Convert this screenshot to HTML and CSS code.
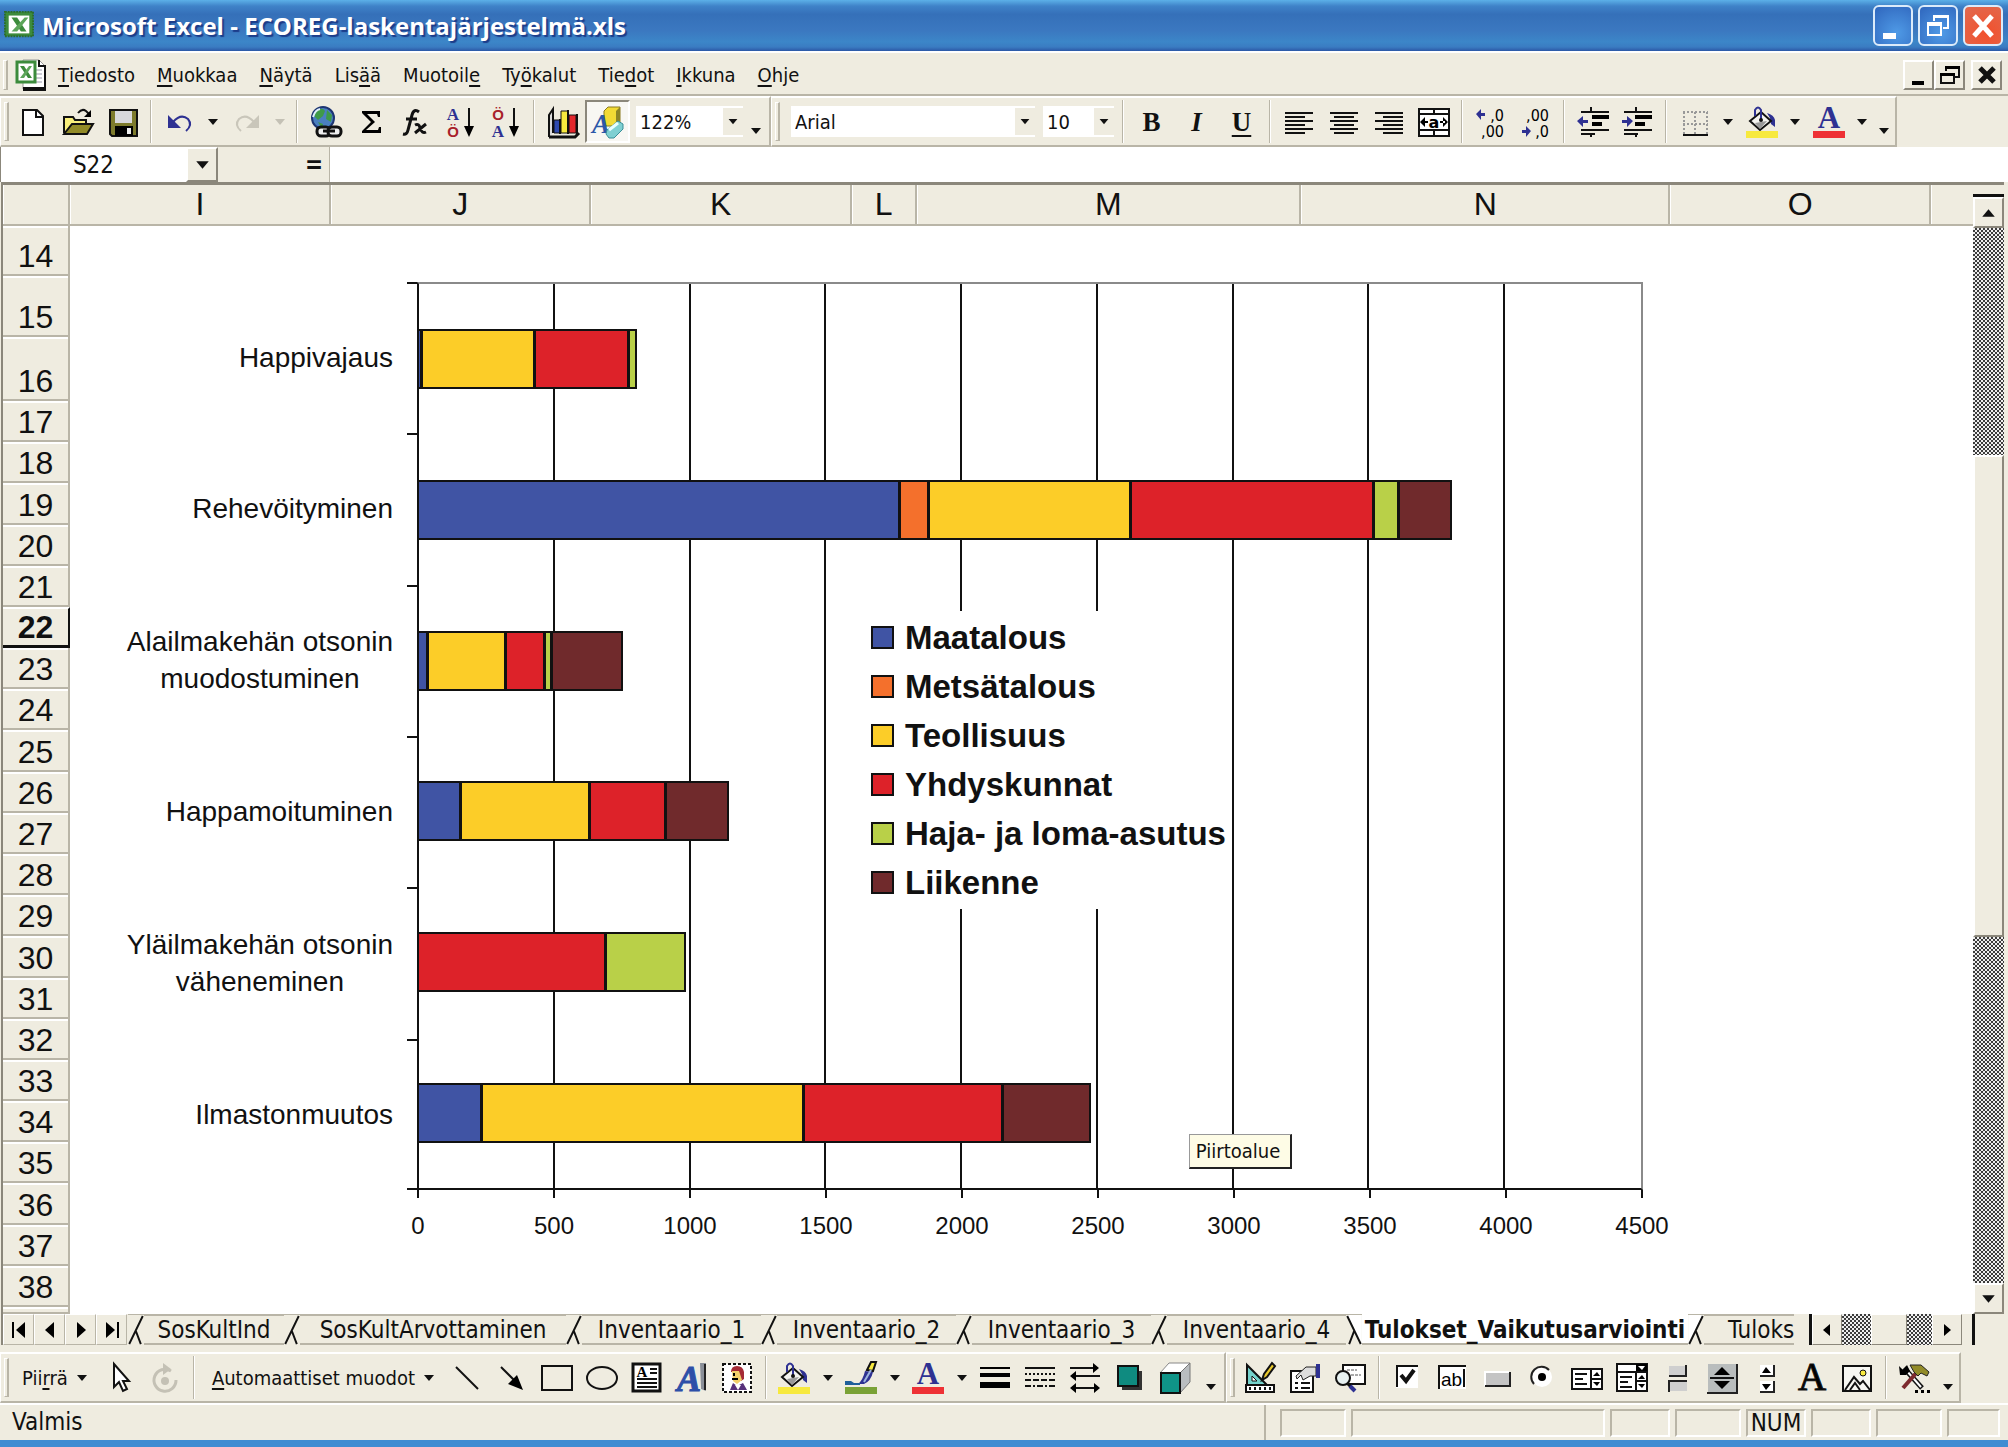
FILE: index.html
```html
<!DOCTYPE html>
<html lang="fi">
<head>
<meta charset="utf-8">
<title>Microsoft Excel - ECOREG-laskentajärjestelmä.xls</title>
<link rel="stylesheet" href="styles.css">
</head>
<body>
<svg class="defs" aria-hidden="true">
  <symbol id="tri" viewBox="0 0 12 8"><path d="M1 1h10l-5 6z" fill="currentColor"/></symbol>
  <symbol id="align-l" viewBox="0 0 32 32"><path d="M2 7h28M2 11h20M2 15h28M2 19h20M2 23h28M2 27h20" stroke="#111" stroke-width="2"/></symbol>
  <symbol id="align-c" viewBox="0 0 32 32"><path d="M2 7h28M6 11h20M2 15h28M6 19h20M2 23h28M6 27h20" stroke="#111" stroke-width="2"/></symbol>
  <symbol id="align-r" viewBox="0 0 32 32"><path d="M2 7h28M10 11h20M2 15h28M10 19h20M2 23h28M10 27h20" stroke="#111" stroke-width="2"/></symbol>
  <symbol id="bucket" viewBox="0 0 32 32">
    <path d="M21 7q7 2 8 7v7l-4-3-1-6z" fill="#2e3192"/>
    <path d="M4 15 15 6l10 9-11 9z" fill="#f4f4f0" stroke="#111" stroke-width="2"/>
    <path d="M9 17l12-2-7 8z" fill="#999"/>
    <path d="M9 10V4q3-5 6 0v10" fill="none" stroke="#2e3192" stroke-width="2"/><circle cx="15" cy="14" r="2" fill="#111"/>
    <path d="M0 25h32v7H0z" fill="#f7e93e"/>
  </symbol>
  <symbol id="font-color" viewBox="0 0 32 32" overflow="visible">
    <text x="16" y="22" text-anchor="middle" font-family="Liberation Serif, serif" font-weight="700" font-size="31" fill="#2e3192">A</text>
    <path d="M0 25h32v7H0z" fill="#ee3135"/>
  </symbol>
</svg>

<header class="titlebar">
  <svg class="app-icon" viewBox="0 0 32 32"><path d="M1 3h30v26H1z" fill="#3c8b3c" stroke="#2c6e2c" stroke-width="2" stroke-dasharray="2 1"/><path d="M5 7h22v19H5z" fill="#fff"/><path d="M8 9h6l10 15h-6z" fill="#3c8b3c"/><path d="M22 9h4L14 24H8z" fill="#5da55a"/></svg>
  <h1>Microsoft Excel - ECOREG-laskentajärjestelmä.xls</h1>
  <div class="win-buttons">
    <button class="win-btn" aria-label="Pienennä"><svg viewBox="0 0 32 32"><path d="M6 23h13v6H6z" fill="#fff"/></svg></button>
    <button class="win-btn" aria-label="Palauta"><svg viewBox="0 0 32 32"><path d="M12 11V6h14v12h-5M6 13h13v12H6z" fill="none" stroke="#fff" stroke-width="2"/><path d="M11 5h16v3H11zM5 12h15v4H5z" fill="#fff"/></svg></button>
    <button class="win-btn win-close" aria-label="Sulje"><svg viewBox="0 0 32 32"><path d="M7 6l18 20M25 6L7 26" stroke="#fff" stroke-width="5"/></svg></button>
  </div>
</header>

<nav class="menubar">
  <span class="grip"></span>
  <svg class="doc-icon" viewBox="0 0 32 34"><path d="M8 2h16l6 6v23H8z" fill="#fff" stroke="#999" stroke-width="1"/><path d="M24 2v6h6v22" fill="none" stroke="#111" stroke-width="2"/><path d="M8 29h23v4H8z" fill="#111"/><path d="M20 12h7M20 16h7M20 20h7M12 24h15" stroke="#99a" stroke-width="1"/><path d="M2 4h18v20H2z" fill="#fff" stroke="#3c8b3c" stroke-width="3"/><path d="M5 8h4l8 12h-4z" fill="#3c8b3c"/><path d="M14 8h3L9 20H5z" fill="#5da55a"/></svg>
  <button class="menu"><u>T</u>iedosto</button>
  <button class="menu"><u>M</u>uokkaa</button>
  <button class="menu"><u>N</u>äytä</button>
  <button class="menu">Lis<u>ä</u>ä</button>
  <button class="menu">Muotoil<u>e</u></button>
  <button class="menu">Ty<u>ö</u>kalut</button>
  <button class="menu">Tie<u>d</u>ot</button>
  <button class="menu"><u>I</u>kkuna</button>
  <button class="menu"><u>O</u>hje</button>
  <div class="doc-buttons">
    <button class="doc-btn" aria-label="Pienennä työkirja"><svg viewBox="0 0 24 24"><path d="M5 18h12v4H5z"/></svg></button>
    <button class="doc-btn" aria-label="Palauta työkirja"><svg viewBox="0 0 24 24"><path d="M8 8V4h13v10h-4M3 11h13v9H3z" fill="none" stroke="#111" stroke-width="2"/><path d="M7 3h15v3H7zM2 10h15v3H2z"/></svg></button>
    <button class="doc-btn doc-close" aria-label="Sulje työkirja"><svg viewBox="0 0 24 24"><path d="M5 5l14 14M19 5L5 19" stroke="#111" stroke-width="5"/></svg></button>
  </div>
</nav>

<div class="toolbars">
  <div class="toolbar toolbar-std">
    <span class="grip"></span>
    <button class="tool" aria-label="Uusi"><svg viewBox="0 0 32 32"><path d="M6 4h14l6 6v19H6z" fill="#fff" stroke="#111" stroke-width="2"/><path d="M19 4v7h7" fill="none" stroke="#111" stroke-width="2"/></svg></button>
    <button class="tool" aria-label="Avaa"><svg viewBox="0 0 32 32"><path d="M2 27V11h9l2 3h11v4" fill="#f8ef7c" stroke="#111" stroke-width="2"/><path d="M2 28l8-10h21l-6 10z" fill="#928b28" stroke="#111" stroke-width="2"/><path d="M16 7q4-5 8-2l4 4" fill="none" stroke="#111" stroke-width="2"/><path d="M29 4v7h-7z"/></svg></button>
    <button class="tool" aria-label="Tallenna"><svg viewBox="0 0 32 32"><path d="M3 4h27v26H5l-2-2z" fill="#7d7b2c" stroke="#111" stroke-width="2"/><path d="M8 5h17v12H8z" fill="#d8d8dc"/><path d="M8 20h18v10H8z"/><path d="M20 22h4v6h-4z" fill="#eee"/></svg></button>
    <span class="sep"></span>
    <button class="tool" aria-label="Kumoa"><svg viewBox="0 0 32 32"><path d="M4 9v13h13z" fill="#2e3192"/><path d="M9 16q8-9 15-3 5 6-2 12" fill="none" stroke="#2e3192" stroke-width="2"/></svg></button>
    <button class="drop" aria-label="Kumoa-luettelo"><svg><use href="#tri"/></svg></button>
    <button class="tool off" aria-label="Tee uudelleen" disabled><svg viewBox="0 0 32 32"><path d="M28 9v13H15z" fill="#c9c6ba"/><path d="M23 16q-8-9-15-3-5 6 2 12" fill="none" stroke="#c9c6ba" stroke-width="2"/></svg></button>
    <button class="drop off" aria-label="Tee uudelleen -luettelo" disabled><svg><use href="#tri"/></svg></button>
    <span class="sep"></span>
    <button class="tool" aria-label="Hyperlinkki"><svg viewBox="0 0 32 32"><circle cx="13" cy="12" r="11" fill="#4a7fc0" stroke="#1d3572" stroke-width="2"/><path d="M7 4q6-3 8 1l-2 5-5 4-4-4zM17 4l5 5-1 7-5-3zM8 16l5 2-1 5z" fill="#3f9a48"/><path d="M3 11q2-7 7-8" stroke="#dfeefa" stroke-width="2" fill="none"/><rect x="7" y="21" width="13" height="9" rx="4" fill="#eee" stroke="#111" stroke-width="3"/><rect x="18" y="21" width="13" height="9" rx="4" fill="#eee" stroke="#111" stroke-width="3"/><path d="M13 25h12" stroke="#111" stroke-width="3"/></svg></button>
    <button class="tool" aria-label="Summa"><svg viewBox="0 0 32 32"><path d="M7 5h18v6h-2l-1-3H12l8 8-9 8h12l1-3h2v6H7v-2l9-9-9-9z"/></svg></button>
    <button class="tool" aria-label="Liitä funktio"><svg viewBox="0 0 32 32"><path d="M19 6q-5-4-7 3L8 24q-1 5-5 4M6 13h11" fill="none" stroke="#111" stroke-width="3"/><path d="M15 19q4-2 5 3 2 6 6 4M26 18l-11 9" fill="none" stroke="#111" stroke-width="3"/></svg></button>
    <button class="tool" aria-label="Lajittele nousevasti"><svg viewBox="0 0 32 32"><text x="8" y="14" text-anchor="middle" class="ic-serif" fill="#2e3192">A</text><text x="8" y="31" text-anchor="middle" class="ic-sans" fill="#a81e2a">Ö</text><path d="M24 2v20" stroke="#111" stroke-width="2"/><path d="M19 20h10l-5 11z"/></svg></button>
    <button class="tool" aria-label="Lajittele laskevasti"><svg viewBox="0 0 32 32"><text x="8" y="14" text-anchor="middle" class="ic-sans" fill="#a81e2a">Ö</text><text x="8" y="31" text-anchor="middle" class="ic-serif" fill="#2e3192">A</text><path d="M24 2v20" stroke="#111" stroke-width="2"/><path d="M19 20h10l-5 11z"/></svg></button>
    <span class="sep"></span>
    <button class="tool" aria-label="Ohjattu kaavion luominen"><svg viewBox="0 0 32 32"><path d="M2 31V9l4-6v24" fill="#ddd" stroke="#111" stroke-width="2"/><path d="M2 31h26l4-4" fill="none" stroke="#111" stroke-width="3"/><path d="M7 14h6v13H7z" fill="#2e4ab0" stroke="#111"/><path d="M14 5h7v22h-7z" fill="#f7e93e" stroke="#111"/><path d="M22 9h7v18h-7z" fill="#e3272c" stroke="#111"/><path d="M13 13v15M21 4v24M30 8v20" stroke="#111" stroke-width="2"/></svg></button>
    <button class="tool pressed" aria-label="Piirto" aria-pressed="true"><svg viewBox="0 0 32 32"><path d="M12 5l4-4h12v16l-4 3H12z" fill="#f2da35" stroke="#8a7a20"/><path d="M24 5l4-4v16l-4 3z" fill="#8c8426"/><text x="9" y="27" text-anchor="middle" font-family="Liberation Serif, serif" font-weight="700" font-style="italic" font-size="27" fill="#2d57a8">A</text><path d="M15 24l11-9 5 3v5l-9 9h-5l-3-4z" fill="#7fd0d2" stroke="#3a8f98"/><path d="M17 24l9-7" stroke="#e8ffff" stroke-width="3"/></svg></button>
    <span class="combo combo-zoom"><select aria-label="Zoomaus"><option>122%</option></select><svg><use href="#tri"/></svg></span>
    <button class="drop more" aria-label="Lisää painikkeita"><svg><use href="#tri"/></svg></button>
  </div>
  <div class="toolbar toolbar-fmt">
    <span class="grip"></span>
    <span class="combo combo-font"><select aria-label="Fontti"><option>Arial</option></select><svg><use href="#tri"/></svg></span>
    <span class="combo combo-size"><select aria-label="Fonttikoko"><option>10</option></select><svg><use href="#tri"/></svg></span>
    <span class="sep"></span>
    <button class="tool glyph">B</button>
    <button class="tool glyph glyph-i">I</button>
    <button class="tool glyph glyph-u">U</button>
    <span class="sep"></span>
    <button class="tool" aria-label="Tasaa vasemmalle"><svg><use href="#align-l"/></svg></button>
    <button class="tool" aria-label="Keskitä"><svg><use href="#align-c"/></svg></button>
    <button class="tool" aria-label="Tasaa oikealle"><svg><use href="#align-r"/></svg></button>
    <button class="tool" aria-label="Yhdistä ja keskitä"><svg viewBox="0 0 32 32"><path d="M1 3h30v27H1zM1 8h30M1 24h30M16 3v5M16 24v6" fill="#fff" stroke="#111" stroke-width="2"/><path d="M2 16l5-5v10zM30 16l-5-5v10zM5 15h5v2H5zM22 15h5v2h-5z"/><text x="16" y="22" text-anchor="middle" font-family="DejaVu Sans, sans-serif" font-weight="700" font-size="16">a</text></svg></button>
    <span class="sep"></span>
    <button class="tool" aria-label="Lisää desimaaleja"><svg viewBox="0 0 32 32"><path d="M1 8l5-5v4h4v3H6v4z" fill="#2e3192"/><text x="29" y="15" text-anchor="end" class="ic-dec">,0</text><text x="29" y="31" text-anchor="end" class="ic-dec">,00</text></svg></button>
    <button class="tool" aria-label="Vähennä desimaaleja"><svg viewBox="0 0 32 32"><text x="29" y="15" text-anchor="end" class="ic-dec">,00</text><text x="29" y="31" text-anchor="end" class="ic-dec">,0</text><path d="M11 25l-5-5v4H2v3h4v4z" fill="#2e3192"/></svg></button>
    <span class="sep"></span>
    <button class="tool" aria-label="Pienennä sisennystä"><svg viewBox="0 0 32 32"><path d="M4 6h28M4 24h28M4 28h14M15 18h9M15 11h17" stroke="#111" stroke-width="2"/><path d="M15 9h17v4H15zM15 16h10v4H15z"/><path d="M14 1v4M14 27v4" stroke="#111" stroke-width="2"/><path d="M0 15l6-5v4h5v3H6v4z" fill="#2e3192"/></svg></button>
    <button class="tool" aria-label="Suurenna sisennystä"><svg viewBox="0 0 32 32"><path d="M2 6h28M2 24h28M2 28h14" stroke="#111" stroke-width="2"/><path d="M13 9h17v4H13zM13 16h10v4H13z"/><path d="M14 1v4M14 27v4" stroke="#111" stroke-width="2"/><path d="M11 15l-6-5v4H0v3h5v4z" fill="#2e3192"/></svg></button>
    <span class="sep"></span>
    <button class="tool" aria-label="Reunat"><svg viewBox="0 0 32 32"><path d="M4 6h25M4 18h25M5 6v22M16 6v22M28 6v22" stroke="#999" stroke-width="2" stroke-dasharray="2 2"/><path d="M4 29h25" stroke="#111" stroke-width="2"/></svg></button>
    <button class="drop" aria-label="Reunaluettelo"><svg><use href="#tri"/></svg></button>
    <button class="tool" aria-label="Täyttöväri"><svg><use href="#bucket"/></svg></button>
    <button class="drop" aria-label="Täyttövärit"><svg><use href="#tri"/></svg></button>
    <button class="tool" aria-label="Fontin väri"><svg><use href="#font-color"/></svg></button>
    <button class="drop" aria-label="Fontin värit"><svg><use href="#tri"/></svg></button>
    <button class="drop more" aria-label="Lisää muotoilupainikkeita"><svg><use href="#tri"/></svg></button>
  </div>
</div>

<div class="formulabar">
  <input class="namebox" type="text" value="S22" aria-label="Nimiruutu">
  <button class="name-drop" aria-label="Nimet"><svg><use href="#tri"/></svg></button>
  <button class="equals">=</button>
  <input class="formula" type="text" aria-label="Kaava">
</div>

<main class="workbook">
  <div class="sheet">
    <div class="cols">
      <span></span><span>I</span><span>J</span><span>K</span><span>L</span><span>M</span><span>N</span><span>O</span><span></span>
    </div>
    <div class="sheet-body">
      <div class="rows">
        <span>14</span><span>15</span><span>16</span><span>17</span><span>18</span><span>19</span><span>20</span><span>21</span><span class="current">22</span><span>23</span><span>24</span><span>25</span><span>26</span><span>27</span><span>28</span><span>29</span><span>30</span><span>31</span><span>32</span><span>33</span><span>34</span><span>35</span><span>36</span><span>37</span><span>38</span><span></span>
      </div>
      <section class="chart" aria-label="Vaikutusarviointi">
        <div class="categories">
          <div><p>Happivajaus</p></div>
          <div><p>Rehevöityminen</p></div>
          <div><p>Alailmakehän otsonin<br>muodostuminen</p></div>
          <div><p>Happamoituminen</p></div>
          <div><p>Yläilmakehän otsonin<br>väheneminen</p></div>
          <div><p>Ilmastonmuutos</p></div>
        </div>
        <div class="ticks"><i></i><i></i><i></i><i></i><i></i><i></i></div>
        <div class="plot">
          <div class="gridlines"><i></i><i></i><i></i><i></i><i></i><i></i><i></i><i></i><i></i></div>
          <div class="bars">
            <div class="bar"><b class="maa" style="--v:16"></b><b class="teo" style="--v:415"></b><b class="yhd" style="--v:346"></b><b class="haja" style="--v:25"></b></div>
            <div class="bar"><b class="maa" style="--v:1776"></b><b class="met" style="--v:107"></b><b class="teo" style="--v:743"></b><b class="yhd" style="--v:895"></b><b class="haja" style="--v:92"></b><b class="lii" style="--v:190"></b></div>
            <div class="bar"><b class="maa" style="--v:37"></b><b class="teo" style="--v:287"></b><b class="yhd" style="--v:142"></b><b class="haja" style="--v:26"></b><b class="lii" style="--v:261"></b></div>
            <div class="bar"><b class="maa" style="--v:159"></b><b class="teo" style="--v:475"></b><b class="yhd" style="--v:278"></b><b class="lii" style="--v:230"></b></div>
            <div class="bar"><b class="yhd" style="--v:692"></b><b class="haja" style="--v:291"></b></div>
            <div class="bar"><b class="maa" style="--v:236"></b><b class="teo" style="--v:1184"></b><b class="yhd" style="--v:734"></b><b class="lii" style="--v:322"></b></div>
          </div>
          <ul class="legend">
            <li><b class="maa"></b>Maatalous</li>
            <li><b class="met"></b>Metsätalous</li>
            <li><b class="teo"></b>Teollisuus</li>
            <li><b class="yhd"></b>Yhdyskunnat</li>
            <li><b class="haja"></b>Haja- ja loma-asutus</li>
            <li><b class="lii"></b>Liikenne</li>
          </ul>
          <div class="tooltip" role="tooltip">Piirtoalue</div>
        </div>
        <div class="axis"><span>0</span><span>500</span><span>1000</span><span>1500</span><span>2000</span><span>2500</span><span>3000</span><span>3500</span><span>4000</span><span>4500</span></div>
      </section>
    </div>
  </div>
  <div class="vscroll">
    <span class="split"></span>
    <button class="sb-btn" aria-label="Vieritä ylös"><svg class="up"><use href="#tri"/></svg></button>
    <span class="track track-a"></span>
    <span class="thumb"></span>
    <span class="track track-b"></span>
    <button class="sb-btn" aria-label="Vieritä alas"><svg><use href="#tri"/></svg></button>
  </div>
</main>

<div class="tabbar">
  <div class="tab-nav">
    <button aria-label="Ensimmäinen taulukko"><svg viewBox="0 0 20 20"><path d="M3 2h2v16H3zM16 2v16l-9-8z"/></svg></button>
    <button aria-label="Edellinen taulukko"><svg viewBox="0 0 20 20"><path d="M14 2v16l-9-8z"/></svg></button>
    <button aria-label="Seuraava taulukko"><svg viewBox="0 0 20 20"><path d="M6 2v16l9-8z"/></svg></button>
    <button aria-label="Viimeinen taulukko"><svg viewBox="0 0 20 20"><path d="M4 2v16l9-8zM15 2h2v16h-2z"/></svg></button>
  </div>
  <div class="tabs">
    <svg class="slash" viewBox="0 0 16 31"><path d="M1 30L15 1M8 17l5 13" /></svg>
    <button class="tab tab-short">SosKultInd</button>
    <svg class="slash" viewBox="0 0 16 31"><path d="M1 30L15 1M8 17l5 13" /></svg>
    <button class="tab tab-long">SosKultArvottaminen</button>
    <svg class="slash" viewBox="0 0 16 31"><path d="M1 30L15 1M8 17l5 13" /></svg>
    <button class="tab">Inventaario_1</button>
    <svg class="slash" viewBox="0 0 16 31"><path d="M1 30L15 1M8 17l5 13" /></svg>
    <button class="tab">Inventaario_2</button>
    <svg class="slash" viewBox="0 0 16 31"><path d="M1 30L15 1M8 17l5 13" /></svg>
    <button class="tab">Inventaario_3</button>
    <svg class="slash" viewBox="0 0 16 31"><path d="M1 30L15 1M8 17l5 13" /></svg>
    <button class="tab">Inventaario_4</button>
    <svg class="slash" viewBox="0 0 16 31"><path d="M1 0h15v31z" class="paper"/><path d="M1 1l14 29M8 17L3 30"/></svg>
    <button class="tab tab-active">Tulokset_Vaikutusarviointi</button>
    <svg class="slash" viewBox="0 0 16 31"><path d="M0 0h15L1 30H0z" class="paper"/><path d="M1 30L15 1M8 17l5 13" /></svg>
    <button class="tab tab-cut">Tuloks</button>
  </div>
  <div class="hscroll">
    <button class="hs-btn" aria-label="Vieritä vasemmalle"><svg viewBox="0 0 20 20"><path d="M13 4v12l-7-6z"/></svg></button>
    <span class="track hs-a"></span><span class="hs-thumb"></span><span class="track hs-b"></span>
    <button class="hs-btn" aria-label="Vieritä oikealle"><svg viewBox="0 0 20 20"><path d="M7 4v12l7-6z"/></svg></button>
  </div>
  <span class="corner"></span>
</div>

<div class="toolbars">
  <div class="toolbar toolbar-draw">
    <span class="grip"></span>
    <button class="text-tool"><span>Pii<u>r</u>rä</span><svg><use href="#tri"/></svg></button>
    <button class="tool" aria-label="Valitse objektit"><svg viewBox="0 0 32 32"><path d="M10 2v23l5-5 4 9 4-2-4-8h6z" fill="#fff" stroke="#111" stroke-width="2"/></svg></button>
    <button class="tool off" aria-label="Vapaa kierto" disabled><svg viewBox="0 0 32 32"><path d="M22 9A11 11 0 1 0 27 18" fill="none" stroke="#c4c1b5" stroke-width="3"/><path d="M14 1l8 6-8 6z" fill="#c4c1b5"/><circle cx="16" cy="19" r="4" fill="#c4c1b5"/></svg></button>
    <span class="sep"></span>
    <button class="text-tool"><span><u>A</u>utomaattiset muodot</span><svg><use href="#tri"/></svg></button>
    <button class="tool" aria-label="Viiva"><svg viewBox="0 0 32 32"><path d="M5 5l22 22" stroke="#111" stroke-width="2"/></svg></button>
    <button class="tool" aria-label="Nuoli"><svg viewBox="0 0 32 32"><path d="M5 5l18 18" stroke="#111" stroke-width="2"/><path d="M27 28l-15-6 9-9z"/></svg></button>
    <button class="tool" aria-label="Suorakulmio"><svg viewBox="0 0 32 32"><path d="M1 4h30v24H1z" fill="none" stroke="#111" stroke-width="2"/></svg></button>
    <button class="tool" aria-label="Soikio"><svg viewBox="0 0 32 32"><ellipse cx="16" cy="16" rx="15" ry="11" fill="none" stroke="#111" stroke-width="2"/></svg></button>
    <button class="tool" aria-label="Tekstiruutu"><svg viewBox="0 0 32 32"><path d="M2 2h27v27H2z" fill="#fff" stroke="#111" stroke-width="3"/><text x="11" y="15" text-anchor="middle" font-family="Liberation Serif, serif" font-weight="700" font-size="15">A</text><path d="M19 7h7M19 11h7M6 17h20M6 21h20M6 25h20" stroke="#111" stroke-width="2"/></svg></button>
    <button class="tool" aria-label="WordArt"><svg viewBox="0 0 32 32"><path d="M24 1h6v28l-5-2z" fill="#8a8f98"/><path d="M29 2v26" stroke="#222" stroke-width="2"/><text x="13" y="29" text-anchor="middle" font-family="Liberation Serif, serif" font-weight="700" font-style="italic" font-size="36" fill="#2d4fa8" stroke="#2d4fa8">A</text></svg></button>
    <button class="tool" aria-label="ClipArt-kuva"><svg viewBox="0 0 32 32"><path d="M2 2h28v28H2z" fill="#fff" stroke="#111" stroke-width="2" stroke-dasharray="3 2"/><path d="M10 10q0-6 6-6t7 6v7l-3 2-4-9z" fill="#a52a35"/><path d="M11 9h7l3 9-5 4-4-3z" fill="#f2cf6a"/><path d="M11 16h6v2h-6zM12 11h2v3h-2z"/><path d="M9 28l3-7 4 3 6-3 4 7z" fill="#57307a"/><path d="M14 23l3 5 3-5z" fill="#fff"/></svg></button>
    <span class="sep"></span>
    <button class="tool" aria-label="Täyttö"><svg><use href="#bucket"/></svg></button>
    <button class="drop" aria-label="Täytöt"><svg><use href="#tri"/></svg></button>
    <button class="tool" aria-label="Viivan väri"><svg viewBox="0 0 32 32"><path d="M22 8l4-8h5l-3 9z" fill="#f7e93e" stroke="#111" stroke-width="2"/><path d="M20 9l8 1q-2 9-9 12h-6q5-4 7-13z" fill="#2e3192"/><path d="M19 20l7-12" stroke="#9db4e0" stroke-width="2"/><path d="M0 19h6l3 2h6v2H0z" fill="#1f5f9a"/><path d="M0 25h32v7H0z" fill="#7aa236"/></svg></button>
    <button class="drop" aria-label="Viivan värit"><svg><use href="#tri"/></svg></button>
    <button class="tool" aria-label="Tekstin väri"><svg><use href="#font-color"/></svg></button>
    <button class="drop" aria-label="Tekstin värit"><svg><use href="#tri"/></svg></button>
    <button class="tool" aria-label="Viivan tyyli"><svg viewBox="0 0 32 32"><path d="M1 5h30v2H1zM1 11h30v4H1zM1 20h30v6H1z"/></svg></button>
    <button class="tool" aria-label="Katkoviiva"><svg viewBox="0 0 32 32"><g stroke="#111" stroke-width="2"><path d="M1 6h30"/><path d="M1 12h30" stroke-dasharray="2 2"/><path d="M1 18h30" stroke-dasharray="6 2"/><path d="M1 24h30" stroke-dasharray="6 2 2 2"/></g></svg></button>
    <button class="tool" aria-label="Nuolen tyyli"><svg viewBox="0 0 32 32"><path d="M1 6h28M3 14h28M3 26h26" stroke="#111" stroke-width="2"/><path d="M30 6l-6-5v10zM1 14l6-5v10zM1 26l6-5v10zM31 26l-6-5v10z"/></svg></button>
    <button class="tool" aria-label="Varjostus"><svg viewBox="0 0 32 32"><path d="M8 9h20v19H8z" fill="#333"/><path d="M4 4h20v20H4z" fill="#0f8b80" stroke="#111" stroke-width="2"/></svg></button>
    <button class="tool" aria-label="Kolmiulotteisuus"><svg viewBox="0 0 32 32"><path d="M1 11l9-10h21L21 11z" fill="#fff" stroke="#888"/><path d="M21 11L31 1v19l-10 11z" fill="#b9bdc0" stroke="#777"/><path d="M2 11h19v20H2z" fill="#0f9488" stroke="#111" stroke-width="2"/></svg></button>
    <button class="drop more" aria-label="Lisää piirtopainikkeita"><svg><use href="#tri"/></svg></button>
  </div>
  <div class="toolbar toolbar-controls">
    <span class="grip"></span>
    <button class="tool" aria-label="Rakennenäkymä"><svg viewBox="0 0 32 32"><path d="M3 3v20h20z" fill="#74d2cc" stroke="#111" stroke-width="2"/><path d="M8 14v5h5z" fill="#fff" stroke="#111"/><path d="M2 23h28v7H2z" fill="#fff" stroke="#111" stroke-width="2"/><path d="M6 25v3M11 25v3M16 25v3M21 25v3M26 25v3" stroke="#111" stroke-width="2"/><path d="M18 18l2-6 8-11 3 3-8 11z" fill="#e8c92e" stroke="#111" stroke-width="2"/></svg></button>
    <button class="tool" aria-label="Ominaisuudet"><svg viewBox="0 0 32 32"><path d="M2 9h22v21H2z" fill="#fff" stroke="#111" stroke-width="2"/><path d="M6 21h3M12 21h9M6 26h3M12 26h9" stroke="#111" stroke-width="2"/><path d="M7 14l10-9h10v9h-6l-7 4-2-5-4 4z" fill="#ddd" stroke="#222" stroke-width="1"/><path d="M27 2h4v14h-4z" fill="#2e3192"/></svg></button>
    <button class="tool" aria-label="Näytä koodi"><svg viewBox="0 0 32 32"><path d="M9 3h22v19H9z" fill="#fff" stroke="#111" stroke-width="2"/><path d="M13 8h10M17 13h10" stroke="#555" stroke-dasharray="3 1"/><circle cx="9" cy="16" r="7" fill="#e8f2f2" stroke="#111" stroke-width="2"/><path d="M13 21l4 4" stroke="#111" stroke-width="3"/><path d="M16 24l5 5" stroke="#2e3192" stroke-width="4"/></svg></button>
    <span class="sep"></span>
    <button class="tool" aria-label="Valintaruutu"><svg viewBox="0 0 32 32"><path d="M5 5h22v21H5z" fill="#fff"/><path d="M27 4H6v21" fill="none" stroke="#111" stroke-width="2"/><path d="M10 13l5 6 8-11" fill="none" stroke="#111" stroke-width="4"/></svg></button>
    <button class="tool" aria-label="Muokkausruutu"><svg viewBox="0 0 32 32"><path d="M3 5h27v22H3z" fill="#fff"/><path d="M30 4H3v23" fill="none" stroke="#111" stroke-width="2"/><text x="5" y="24" font-family="Liberation Sans, sans-serif" font-size="19">ab</text><path d="M28 7v18" stroke="#111" stroke-width="2"/></svg></button>
    <button class="tool" aria-label="Komentopainike"><svg viewBox="0 0 32 32"><path d="M4 10h25v14H4z" fill="#c4c4c4"/><path d="M4 24V10h24" fill="none" stroke="#fff" stroke-width="2"/><path d="M4 24h25V10" fill="none" stroke="#222" stroke-width="2"/></svg></button>
    <button class="tool" aria-label="Valintanappi"><svg viewBox="0 0 32 32"><circle cx="16" cy="15" r="10" fill="#fff"/><path d="M8 22a10 10 0 0 1 15-14" fill="none" stroke="#222" stroke-width="2"/><circle cx="16" cy="15" r="4"/></svg></button>
    <button class="tool" aria-label="Luetteloruutu"><svg viewBox="0 0 32 32"><path d="M1 7h30v20H1z" fill="#fff" stroke="#111" stroke-width="2"/><path d="M20 7v20M20 17h10" stroke="#111" stroke-width="2"/><path d="M4 12h12M4 17h8M4 22h12" stroke="#111" stroke-width="2"/><path d="M22 14h7l-3-4zM22 20h7l-3 4z"/></svg></button>
    <button class="tool" aria-label="Yhdistelmäruutu"><svg viewBox="0 0 32 32"><path d="M1 2h30v27H1z" fill="#fff" stroke="#111" stroke-width="2"/><path d="M20 2h11v7H20z"/><path d="M1 10h30M20 9v20M20 19h10M4 15h12M4 20h8M4 25h12" stroke="#111" stroke-width="2"/><path d="M22 17h7l-3-4zM22 22h7l-3 4z"/><path d="M22 4h7l-3 4z" fill="#fff"/></svg></button>
    <button class="tool" aria-label="Vaihtopainike"><svg viewBox="0 0 32 32"><path d="M8 4h18v10H8zM8 19h18v10H8z" fill="#cfcfcf"/><path d="M8 14h17V3" fill="none" stroke="#222" stroke-width="2"/><path d="M26 19H8v11" fill="none" stroke="#222" stroke-width="2"/></svg></button>
    <button class="tool" aria-label="Askellusnuoli"><svg viewBox="0 0 32 32"><path d="M2 2h28v29H2z" fill="#b9bdbd"/><path d="M1 31h30V2" fill="none" stroke="#222" stroke-width="2"/><path d="M4 16h24" stroke="#111" stroke-width="2"/><path d="M8 13h16l-8-8zM8 19h16l-8 8z"/></svg></button>
    <button class="tool" aria-label="Vierityspalkki"><svg viewBox="0 0 32 32"><path d="M9 3h13v11H9zM9 19h13v11H9z" fill="#fff"/><path d="M9 14h14V3M9 30h14V19" fill="none" stroke="#222" stroke-width="2"/><path d="M11 11h9l-5-6zM11 22h9l-5 6z"/></svg></button>
    <button class="tool" aria-label="Otsikko"><svg viewBox="0 0 32 32"><text x="16" y="28" text-anchor="middle" font-family="Liberation Serif, serif" font-size="39" stroke="#111">A</text></svg></button>
    <button class="tool" aria-label="Kuva"><svg viewBox="0 0 32 32"><path d="M2 4h28v25H2z" fill="#f7f7f2" stroke="#111" stroke-width="2"/><circle cx="22" cy="11" r="3" fill="#f7e93e" stroke="#111"/><path d="M4 28l9-13 6 7 3-3 7 9M9 28l5-7 5 7" fill="none" stroke="#111" stroke-width="2"/></svg></button>
    <span class="sep"></span>
    <button class="tool" aria-label="Lisää ohjausobjekteja"><svg viewBox="0 0 32 32"><path d="M6 6l18 20" stroke="#111" stroke-width="5"/><path d="M8 8l15 17" stroke="#fff" stroke-width="2"/><path d="M1 4l4 4 4-5 3 6-4 4H2z"/><path d="M5 26L20 9" stroke="#7d2a2e" stroke-width="4"/><path d="M12 3h11l8 7-2 4-6-3-3 3-4-4z" fill="#928b28" stroke="#222"/><path d="M17 28h3v3h-3zM23 28h3v3h-3zM29 28h3v3h-3z"/></svg></button>
    <button class="drop more" aria-label="Lisää ohjauspainikkeita"><svg><use href="#tri"/></svg></button>
  </div>
</div>

<footer class="statusbar">
  <span class="status-text">Valmis</span>
  <span class="cell c-66"></span><span class="cell c-wide"></span><span class="cell"></span><span class="cell c-66"></span><span class="cell">NUM</span><span class="cell"></span><span class="cell c-66"></span><span class="cell c-last"></span>
</footer>
</body>
</html>
```
FILE: styles.css
```css
:root {
  --face: #efece0;
  --shade: #b9b5a7;
  --dark: #8b877b;
  --ink: #111;
  --ui: "DejaVu Sans Condensed", "DejaVu Sans", sans-serif;
  --arial: "Liberation Sans", Arial, sans-serif;
}
* { box-sizing: border-box; }
body {
  margin: 0;
  min-height: 100vh;
  display: flex;
  flex-direction: column;
  background: var(--face);
  color: var(--ink);
  font: 20px/24px var(--ui);
  border-bottom: 7px solid #408cd2;
}
button, input, select { font: inherit; color: inherit; border: 0; padding: 0; margin: 0; background: none; border-radius: 0; }
button { display: flex; align-items: center; justify-content: center; }
svg { display: block; flex: none; overflow: visible; }
u { text-decoration-thickness: 2px; text-underline-offset: 3px; }
.defs { position: absolute; width: 0; height: 0; }

/* Title bar */
.titlebar {
  display: flex;
  align-items: center;
  gap: 8px;
  height: 51px;
  padding: 0 5px 0 4px;
  background: linear-gradient(#5cb0e8 0, #3f82c8 12%, #3570b9 28%, #3b78c0 60%, #3c86c8 82%, #3a7cc2 92%, #2c58a6 100%);
}
.app-icon { width: 30px; height: 34px; margin-bottom: 4px; }
.titlebar h1 { flex: 1; margin: 0; font: 700 24px/32px "Open Sans", "Noto Sans", sans-serif; color: #fff; text-shadow: 2px 2px 1px #1c3c8a; white-space: nowrap; }
.win-buttons { display: flex; gap: 5px; }
.win-btn { width: 40px; height: 41px; border: 2px solid #dcebfa; border-radius: 6px; background: radial-gradient(circle at 60% 70%, #4f9ae6, #2f66bd); }
.win-btn svg { width: 32px; height: 32px; }
.win-close { background: radial-gradient(circle at 60% 70%, #f2502c, #e06a50); }

/* Menu bar */
.menubar { display: flex; align-items: center; height: 45px; padding: 3px 6px 0 0; border-top: 2px solid #fff; border-bottom: 2px solid var(--shade); }
.grip { align-self: stretch; width: 5px; margin: 4px 3px; border: 1px solid; border-color: #fff var(--shade) var(--shade) #fff; border-right-width: 2px; }
.doc-icon { width: 32px; height: 34px; margin: 0 11px 0 4px; }
.menu { margin-right: 22px; height: 32px; }
.doc-buttons { display: flex; margin-left: auto; }
.doc-btn { width: 31px; height: 30px; border: 2px solid; border-color: #fff var(--dark) var(--dark) #fff; }
.doc-btn svg { width: 24px; height: 24px; }
.doc-close { margin-left: 6px; }

/* Toolbars */
.toolbars { display: flex; }
.toolbar { display: flex; align-items: center; height: 51px; border: 2px solid; border-color: #fff var(--shade) var(--shade) #fff; border-left-width: 1px; }
.toolbar .grip { margin: 4px 1px 4px 3px; }
.tool { flex: none; width: 45px; height: 43px; }
.tool svg { width: 32px; height: 32px; }
.pressed { border: 2px solid; border-color: var(--dark) #fff #fff var(--dark); background: #f8f7f3; }
.drop { flex: none; width: 22px; height: 43px; }
.drop svg, .combo svg, .text-tool svg, .name-drop svg { width: 12px; height: 8px; }
.off { color: #c4c1b5; }
.more { padding-top: 18px; }
.sep { flex: none; width: 2px; height: 43px; margin: 0 5px; background: linear-gradient(90deg, var(--shade) 50%, #fff 50%); }
.combo { position: relative; height: 31px; background: #fff; }
.combo select { appearance: none; width: 100%; height: 100%; padding: 0 4px; }
.combo svg { position: absolute; right: 0; top: 2px; width: 20px; height: 27px; padding: 10px 4px; background: var(--face); pointer-events: none; }
.combo-zoom { width: 107px; margin-left: 6px; }
.combo-font { width: 244px; }
.combo-size { width: 71px; margin: 0 3px 0 8px; }
.toolbar-std .more, .toolbar-draw .more { margin: 0 2px; }
.toolbar-fmt .grip { margin-right: 11px; }
.toolbar-controls .grip { margin-right: 3px; }
.glyph { font: 700 27px/32px "Liberation Serif", serif; }
.glyph-i { font-style: italic; }
.glyph-u { text-decoration: underline; text-decoration-thickness: 2px; text-underline-offset: 4px; }
.ic-serif { font: 700 17px/17px "Liberation Serif", serif; }
.ic-sans { font: 700 15px/15px "Liberation Sans", sans-serif; }
.ic-dec { font: 16px/16px "DejaVu Sans Condensed", sans-serif; }

/* Formula bar */
.formulabar { display: flex; height: 35px; font-size: 24px; }
.namebox { width: 186px; text-align: center; background: #fff; border-left: 1px solid var(--dark); }
.name-drop { width: 32px; border: 2px solid; border-color: #fff var(--dark) var(--dark) #fff; }
.name-drop svg, .sb-btn svg { width: 15px; height: 10px; }
.equals { width: 112px; padding-right: 6px; justify-content: flex-end; font-weight: 700; border-right: 1px solid var(--shade); }
.formula { flex: 1; min-width: 0; background: #fff; }

/* Sheet */
.workbook { flex: 1; display: flex; margin: 0 4px 0 1px; border-top: 3px solid var(--dark); border-left: 2px solid var(--dark); }
.sheet { flex: 1; display: flex; flex-direction: column; min-width: 0; }
.cols { display: grid; grid-template-columns: 67px 261fr 260fr 261fr 65fr 385fr 369fr 261fr 42fr; height: 41px; font: 32px/39px var(--arial); text-align: center; border-bottom: 2px solid var(--shade); }
.cols span { border-right: 2px solid var(--shade); border-left: 1px solid #fff; }
.cols span:last-child { border-right: 0; }
.sheet-body { flex: 1; display: flex; }
.rows { width: 67px; display: grid; grid-template-rows: 50px 61px 64px repeat(22, minmax(32px, 1fr)) 7px; font: 32px/36px var(--arial); text-align: center; border-right: 2px solid var(--shade); }
.rows span { display: flex; align-items: flex-end; justify-content: center; min-height: 0; border-top: 2px solid #fff; border-bottom: 2px solid var(--shade); }
.rows .current { font-weight: 700; margin-right: -2px; border-right: 2px solid #111; border-bottom: 3px solid #111; }

/* Chart */
.chart { flex: 1; display: grid; grid-template-columns: 337px 10px 1fr; grid-template-rows: 1fr 60px; padding: 56px 330px 64px 0; background: #fff; }
.categories { display: grid; grid-template-rows: repeat(6, 1fr); font: 28px/37px var(--arial); text-align: center; padding-right: 14px; }
.categories div { display: flex; align-items: center; justify-content: flex-end; }
.categories p { margin: 0; white-space: nowrap; }
.ticks { display: grid; grid-template-rows: repeat(6, 1fr); }
.ticks i { border-top: 2px solid #111; }
.ticks i:last-child { border-bottom: 2px solid #111; }
.plot { position: relative; display: grid; border: 2px solid #111; border-color: #8a8a8a #8a8a8a #111 #111; }
.gridlines, .bars { grid-area: 1 / 1; display: grid; min-width: 0; }
.gridlines { grid-template-columns: repeat(9, 1fr); }
.gridlines i { border-right: 2px solid #111; }
.gridlines i:last-child { border-right: 0; }
.bars { grid-template-rows: repeat(6, 1fr); align-items: center; }
.bar { display: flex; height: 60px; }
.bar b { width: calc(var(--v) / 4500 * 100%); border: 2px solid #111; border-left: 0; border-right-width: 3px; }
.bar b:last-child { border-right-width: 2px; }
.maa { background: #4054a4; }
.met { background: #f4702c; }
.teo { background: #fccd28; }
.yhd { background: #dd2229; }
.haja { background: #b9d048; }
.lii { background: #702a2c; }
.legend { position: absolute; left: 36.5%; top: 36.2%; margin: 0; padding: 2px 0 0 6px; width: 366px; height: 298px; list-style: none; background: #fff; font: 700 33px/49px var(--arial); white-space: nowrap; }
.legend li { display: flex; align-items: center; gap: 11px; }
.legend b { width: 23px; height: 23px; border: 2px solid #111; }
.tooltip { position: absolute; left: 63%; top: 94%; padding: 4px 10px 4px 6px; background: #fefce6; border: 1px solid #999; border-right: 2px solid #222; border-bottom: 2px solid #222; }
.axis { grid-column: 3; display: flex; justify-content: space-between; margin: 0 1px; font: 24px/28px var(--arial); }
.axis span { width: 0; display: flex; flex-direction: column; align-items: center; }
.axis span::before { content: ""; flex: none; width: 2px; height: 8px; margin-bottom: 14px; background: #111; }

/* Vertical scroll bar */
.vscroll { width: 31px; display: flex; flex-direction: column; }
.split { height: 12px; border-bottom: 3px solid #111; }
.sb-btn { height: 31px; border: 2px solid; border-color: #fff var(--dark) var(--dark) #fff; }
.up { transform: rotate(180deg); }
.track { background: repeating-conic-gradient(#3c3c3c 0 25%, #efefef 0 50%) 0 0 / 4px 4px; }
.track-a { flex: 228; }
.thumb { flex: 480; border: 2px solid; border-color: #fff var(--dark) var(--dark) #fff; }
.track-b { flex: 348; }

/* Sheet tabs */
.tabbar { display: flex; height: 31px; margin: 0 4px 7px 1px; border-left: 2px solid var(--dark); font-size: 24px; }
.tab-nav { display: flex; }
.tab-nav button { width: 31px; border: 1px solid; border-color: #fff var(--shade) var(--shade) #fff; }
.tab-nav svg, .hs-btn svg { width: 20px; height: 20px; }
.tabs { flex: 1; display: flex; min-width: 0; overflow: hidden; padding-left: 1px; }
.slash { width: 16px; height: 31px; border-top: 1px solid var(--shade); fill: none; stroke: #111; stroke-width: 2; }
.paper { fill: #fff; stroke: none; }
.tab { flex: none; width: 179px; border-top: 2px solid var(--shade); border-bottom: 2px solid var(--shade); }
.tab-short { width: 140px; }
.tab-long { width: 266px; }
.tab-active { width: 326px; background: #fff; border-top-color: #fff; font-weight: 700; }
.tab-cut { width: auto; padding-left: 24px; }
.hscroll { display: flex; border-left: 3px solid #111; margin-right: 10px; }
.hs-btn { width: 30px; border: 1px solid; border-color: #fff var(--dark) var(--dark) #fff; }
.hs-a { width: 29px; }
.hs-thumb { width: 36px; border: 1px solid; border-color: #fff var(--dark) var(--dark) #fff; }
.hs-b { width: 25px; }
.corner { width: 32px; border-left: 3px solid #111; }

/* Drawing toolbars */
.text-tool { gap: 8px; height: 43px; padding: 0 10px 0 12px; white-space: nowrap; }

/* Status bar */
.statusbar { display: flex; align-items: center; gap: 5px; height: 37px; padding-right: 8px; font-size: 24px; border-top: 2px solid #fff; }
.status-text { flex: 1; align-self: stretch; padding: 5px 0 0 12px; margin-right: 9px; border-right: 2px solid var(--shade); }
.cell { display: flex; align-items: center; justify-content: center; width: 60px; height: 28px; border: 2px solid; border-color: var(--shade) #fff #fff var(--shade); }
.c-66 { width: 66px; }
.c-wide { width: 254px; }
.c-last { width: 53px; }
```
